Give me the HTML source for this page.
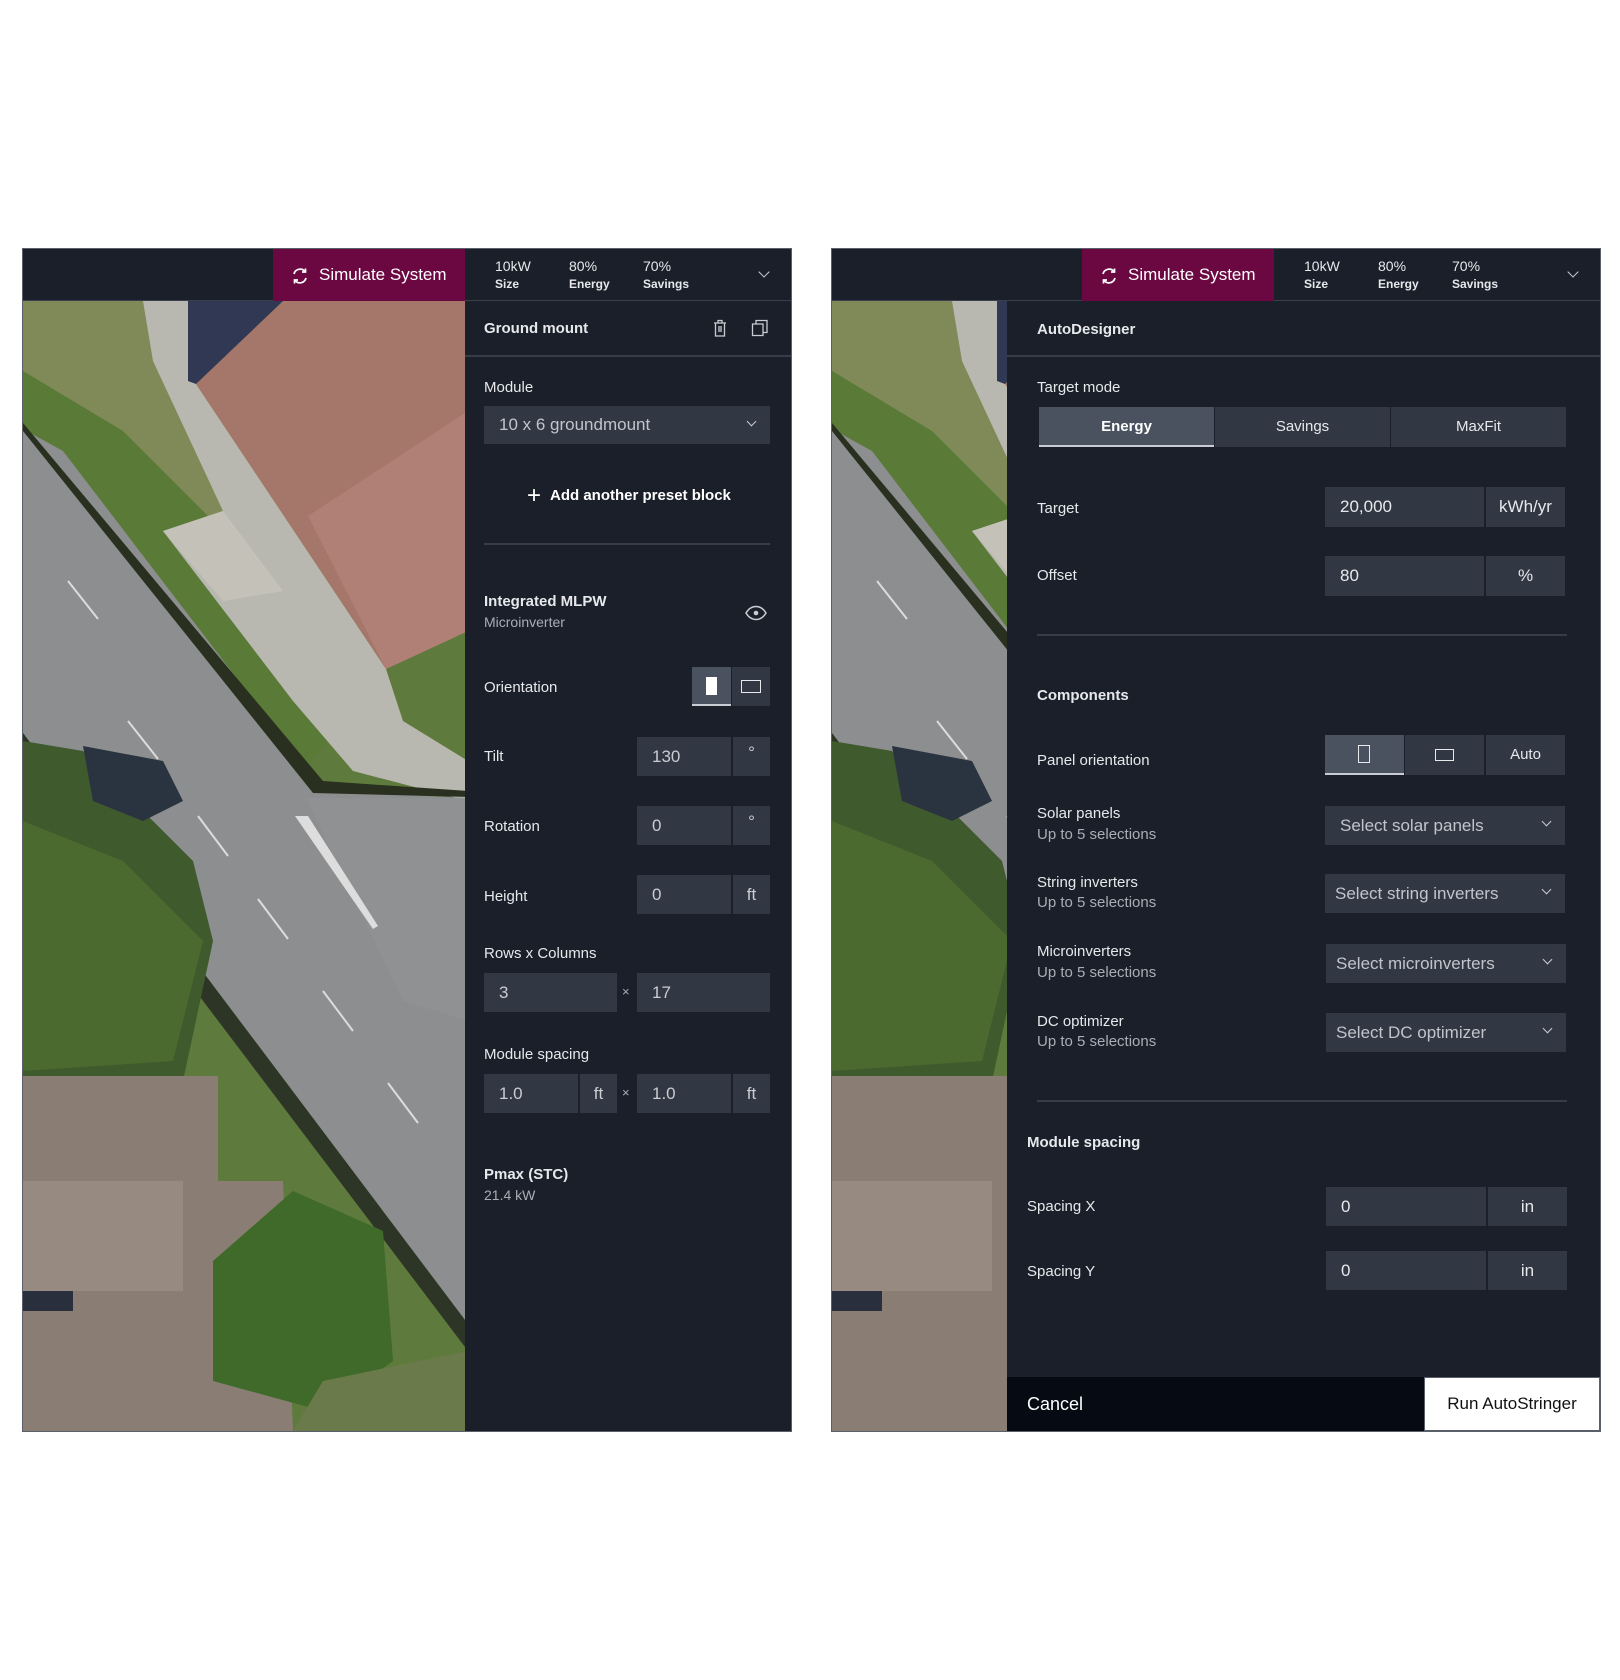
<!DOCTYPE html>
<html><head><meta charset="utf-8"><style>
*{margin:0;padding:0;box-sizing:border-box}
body{width:1620px;height:1680px;background:#fff;position:relative;font-family:"Liberation Sans",sans-serif;color:#e8eaee;overflow:hidden}
.a{position:absolute}
.frame{position:absolute;background:#1b1f29;border:1px solid #5a606a}
.t{position:absolute;white-space:nowrap;line-height:20px;font-size:15px;color:#e6e8ec}
.b{font-weight:bold}
.s{color:#a9aeb6}
.box{position:absolute;background:#323843;color:#c9ccd2;font-size:17px;line-height:20px}
.hl{position:absolute;height:2px;background:#373d48}
.sel{position:absolute;background:#323843;color:#c0c4cb;font-size:17px}
.chev{position:absolute;width:8px;height:8px;border-right:1.5px solid #c9ccd2;border-bottom:1.5px solid #c9ccd2;transform:rotate(45deg)}
.stat{position:absolute;font-size:14px;color:#e6e8ec;line-height:18px;text-align:left}
.stat i{display:block;font-style:normal;font-size:12px;font-weight:bold}
</style></head><body>

<svg width="0" height="0" style="position:absolute">
<defs>
<g id="map">
<rect width="442" height="1130" fill="#7d8b58"/>
<polygon points="0,0 173,0 173,83 363,368 445,330 445,1130 0,1130" fill="#5e7a3c"/>
<polygon points="0,0 140,0 200,100 330,300 200,300 60,110 0,80" fill="#7f8a58"/>
<polygon points="0,70 100,130 290,320 330,410 280,470 0,300" fill="#5a7a38"/>
<polygon points="120,0 173,0 173,83 363,368 380,420 445,460 445,500 330,470 270,400 140,230 200,210 130,60" fill="#b9b8b0"/>
<polygon points="140,230 200,210 260,290 200,300" fill="#c4c2b8"/>
<polygon points="173,83 260,0 445,0 445,330 363,368" fill="#a5766a"/>
<polygon points="285,215 445,110 445,330 363,368" fill="#b08076"/>
<polygon points="165,0 260,0 173,83 165,80" fill="#303853"/>
<polygon points="0,128 40,150 300,490 445,497 445,1023 0,432" fill="#8d8e8f"/>
<polygon points="283,497 445,497 445,720 380,700" fill="#909192"/>
<polygon points="0,122 300,480 445,490 445,496 290,492 0,130" fill="#2a3020"/>
<line x1="45" y1="280" x2="75" y2="318" stroke="#dcdcdc" stroke-width="2"/>
<line x1="105" y1="420" x2="135" y2="458" stroke="#dcdcdc" stroke-width="2"/>
<line x1="175" y1="515" x2="205" y2="555" stroke="#dcdcdc" stroke-width="2"/>
<line x1="235" y1="598" x2="265" y2="638" stroke="#dcdcdc" stroke-width="2"/>
<line x1="300" y1="690" x2="330" y2="730" stroke="#dcdcdc" stroke-width="2"/>
<line x1="365" y1="782" x2="395" y2="822" stroke="#dcdcdc" stroke-width="2"/>
<polygon points="272,515 285,515 355,625 350,628" fill="#dddddd"/>
<polygon points="0,432 445,1023 445,1050 0,462" fill="#2d3526"/>
<polygon points="0,440 60,450 170,560 190,640 160,780 0,790" fill="#3f5a2c"/>
<polygon points="60,445 140,460 160,500 120,520 70,500" fill="#2a3340"/>
<polygon points="0,520 100,560 180,640 150,760 0,770" fill="#4a6a30"/>
<polygon points="0,775 195,775 195,880 260,880 270,1130 0,1130" fill="#8a7e74"/>
<polygon points="0,880 160,880 160,990 0,990" fill="#978a80"/>
<polygon points="0,990 50,990 50,1010 0,1010" fill="#2a2f3d"/>
<polygon points="190,960 270,890 360,930 370,1060 300,1110 190,1080" fill="#3f6a2a"/>
<polygon points="270,1130 300,1080 445,1050 445,1130" fill="#6b7a4a"/>
</g>
</defs>
</svg>

<!-- PANEL 1 -->
<div class="frame" style="left:22px;top:248px;width:770px;height:1184px"></div>
<div class="a" style="left:23px;top:249px;width:768px;height:52px;background:#1b1f29;border-bottom:1px solid #3a404b"></div>
<div class="a" style="left:273px;top:249px;width:192px;height:52px;background:#6b0842"></div>
<svg class="a" style="left:290px;top:266px" width="20" height="20" viewBox="0 0 20 20"><path d="M4 8a6.3 6.3 0 0 1 11-2.5M16 12a6.3 6.3 0 0 1-11 2.5" fill="none" stroke="#fff" stroke-width="1.7"/><path d="M15.5 2.5v3.5h-3.5M4.5 17.5v-3.5h3.5" fill="none" stroke="#fff" stroke-width="1.7"/></svg>
<div class="t" style="left:319px;top:265px;font-size:17px;color:#fff">Simulate System</div>
<div class="stat" style="left:495px;top:257px">10kW<i>Size</i></div>
<div class="stat" style="left:569px;top:257px">80%<i>Energy</i></div>
<div class="stat" style="left:643px;top:257px">70%<i>Savings</i></div>
<div class="chev" style="left:760px;top:268px"></div>

<svg class="a" style="left:23px;top:301px" width="442" height="1130"><use href="#map"/></svg>

<div class="t b" style="left:484px;top:319px">Ground mount</div>
<svg class="a" style="left:711px;top:318px" width="18" height="20" viewBox="0 0 18 20"><path d="M3 5h12M7 5V2.5h4V5M4.5 5v13h9V5M8 8v6M10 8v6" fill="none" stroke="#c9ccd2" stroke-width="1.3"/></svg>
<svg class="a" style="left:750px;top:318px" width="20" height="20" viewBox="0 0 20 20"><path d="M6 6V2.5h11v12h-4M2.5 6h10.5v11.5H2.5z" fill="none" stroke="#c9ccd2" stroke-width="1.3"/></svg>
<div class="hl" style="left:465px;top:355px;width:326px"></div>

<div class="t" style="left:484px;top:378px">Module</div>
<div class="sel" style="left:484px;top:406px;width:286px;height:38px"><span class="a" style="left:15px;top:9px">10 x 6 groundmount</span><div class="chev" style="left:264px;top:12px;width:7px;height:7px"></div></div>
<div class="t b" style="left:527px;top:483px;font-size:15px;color:#fff"><span style="font-weight:normal;font-size:24px;position:relative;top:3px;margin-right:9px">+</span>Add another preset block</div>
<div class="hl" style="left:484px;top:543px;width:286px"></div>

<div class="t b" style="left:484px;top:592px">Integrated MLPW</div>
<div class="t s" style="left:484px;top:612px;font-size:14px">Microinverter</div>
<svg class="a" style="left:744px;top:604px" width="24" height="18" viewBox="0 0 24 18"><path d="M2 9C5 4 9 2.5 12 2.5S19 4 22 9C19 14 15 15.5 12 15.5S5 14 2 9z" fill="none" stroke="#c9ccd2" stroke-width="1.5"/><circle cx="12" cy="9" r="2.3" fill="#c9ccd2"/></svg>

<div class="t" style="left:484px;top:678px">Orientation</div>
<div class="a" style="left:692px;top:667px;width:39px;height:39px;background:#4a5260;border-bottom:2px solid #c9ccd2"></div>
<div class="a" style="left:706px;top:677px;width:11px;height:18px;background:#fff"></div>
<div class="a" style="left:732px;top:667px;width:38px;height:39px;background:#323843"></div>
<div class="a" style="left:741px;top:680px;width:20px;height:13px;border:1.5px solid #e6e8ec"></div>

<div class="t" style="left:484px;top:747px">Tilt</div>
<div class="box" style="left:637px;top:737px;width:94px;height:39px;padding:10px 15px">130</div>
<div class="box" style="left:733px;top:737px;width:37px;height:39px;text-align:center;padding-top:6px">°</div>
<div class="t" style="left:484px;top:817px">Rotation</div>
<div class="box" style="left:637px;top:806px;width:94px;height:39px;padding:10px 15px">0</div>
<div class="box" style="left:733px;top:806px;width:37px;height:39px;text-align:center;padding-top:6px">°</div>
<div class="t" style="left:484px;top:887px">Height</div>
<div class="box" style="left:637px;top:875px;width:94px;height:39px;padding:10px 15px">0</div>
<div class="box" style="left:733px;top:875px;width:37px;height:39px;text-align:center;padding-top:10px">ft</div>

<div class="t" style="left:484px;top:944px">Rows x Columns</div>
<div class="box" style="left:484px;top:973px;width:133px;height:39px;padding:10px 15px">3</div>
<div class="t s" style="left:622px;top:982px;font-size:13px">×</div>
<div class="box" style="left:637px;top:973px;width:133px;height:39px;padding:10px 15px">17</div>

<div class="t" style="left:484px;top:1045px">Module spacing</div>
<div class="box" style="left:484px;top:1074px;width:94px;height:39px;padding:10px 15px">1.0</div>
<div class="box" style="left:580px;top:1074px;width:37px;height:39px;text-align:center;padding-top:10px">ft</div>
<div class="t s" style="left:622px;top:1083px;font-size:13px">×</div>
<div class="box" style="left:637px;top:1074px;width:94px;height:39px;padding:10px 15px">1.0</div>
<div class="box" style="left:733px;top:1074px;width:37px;height:39px;text-align:center;padding-top:10px">ft</div>

<div class="t b" style="left:484px;top:1165px">Pmax (STC)</div>
<div class="t s" style="left:484px;top:1185px;font-size:14px">21.4 kW</div>

<!-- PANEL 2 -->
<div class="frame" style="left:831px;top:248px;width:770px;height:1184px"></div>
<div class="a" style="left:832px;top:249px;width:768px;height:52px;background:#1b1f29;border-bottom:1px solid #3a404b"></div>
<div class="a" style="left:1082px;top:249px;width:192px;height:52px;background:#6b0842"></div>
<svg class="a" style="left:1099px;top:266px" width="20" height="20" viewBox="0 0 20 20"><path d="M4 8a6.3 6.3 0 0 1 11-2.5M16 12a6.3 6.3 0 0 1-11 2.5" fill="none" stroke="#fff" stroke-width="1.7"/><path d="M15.5 2.5v3.5h-3.5M4.5 17.5v-3.5h3.5" fill="none" stroke="#fff" stroke-width="1.7"/></svg>
<div class="t" style="left:1128px;top:265px;font-size:17px;color:#fff">Simulate System</div>
<div class="stat" style="left:1304px;top:257px">10kW<i>Size</i></div>
<div class="stat" style="left:1378px;top:257px">80%<i>Energy</i></div>
<div class="stat" style="left:1452px;top:257px">70%<i>Savings</i></div>
<div class="chev" style="left:1569px;top:268px"></div>

<svg class="a" style="left:832px;top:301px" width="175" height="1130"><use href="#map"/></svg>

<div class="t b" style="left:1037px;top:320px">AutoDesigner</div>
<div class="hl" style="left:1007px;top:355px;width:593px"></div>

<div class="t" style="left:1037px;top:378px">Target mode</div>
<div class="a" style="left:1039px;top:407px;width:175px;height:40px;background:#4a5260;border-bottom:2px solid #c9ccd2;text-align:center;line-height:40px;font-size:15px;font-weight:bold;color:#fff">Energy</div>
<div class="a" style="left:1215px;top:407px;width:175px;height:40px;background:#323843;text-align:center;line-height:40px;font-size:15px;color:#e6e8ec">Savings</div>
<div class="a" style="left:1391px;top:407px;width:175px;height:40px;background:#323843;text-align:center;line-height:40px;font-size:15px;color:#e6e8ec">MaxFit</div>

<div class="t" style="left:1037px;top:499px">Target</div>
<div class="box" style="left:1325px;top:487px;width:159px;height:40px;padding:10px 15px;color:#e6e8ec">20,000</div>
<div class="box" style="left:1486px;top:487px;width:79px;height:40px;text-align:center;padding-top:10px;color:#e6e8ec">kWh/yr</div>
<div class="t" style="left:1037px;top:566px">Offset</div>
<div class="box" style="left:1325px;top:556px;width:159px;height:40px;padding:10px 15px;color:#e6e8ec">80</div>
<div class="box" style="left:1486px;top:556px;width:79px;height:40px;text-align:center;padding-top:10px;color:#e6e8ec">%</div>
<div class="hl" style="left:1037px;top:634px;width:530px"></div>

<div class="t b" style="left:1037px;top:686px">Components</div>
<div class="t" style="left:1037px;top:751px">Panel orientation</div>
<div class="a" style="left:1325px;top:735px;width:79px;height:40px;background:#4a5260;border-bottom:2px solid #c9ccd2"></div>
<div class="a" style="left:1358px;top:745px;width:12px;height:18px;border:1.5px solid #e6e8ec"></div>
<div class="a" style="left:1405px;top:735px;width:79px;height:40px;background:#323843"></div>
<div class="a" style="left:1435px;top:749px;width:19px;height:12px;border:1.5px solid #e6e8ec"></div>
<div class="a" style="left:1486px;top:735px;width:79px;height:40px;background:#323843;text-align:center;line-height:40px;font-size:15px;color:#e6e8ec">Auto</div>

<div class="t" style="left:1037px;top:804px">Solar panels</div>
<div class="t s" style="left:1037px;top:825px">Up to 5 selections</div>
<div class="sel" style="left:1325px;top:806px;width:240px;height:39px"><span class="a" style="left:15px;top:10px">Select solar panels</span><div class="chev" style="left:218px;top:12px;width:7px;height:7px"></div></div>
<div class="t" style="left:1037px;top:873px">String inverters</div>
<div class="t s" style="left:1037px;top:893px">Up to 5 selections</div>
<div class="sel" style="left:1325px;top:874px;width:240px;height:39px"><span class="a" style="left:10px;top:10px">Select string inverters</span><div class="chev" style="left:218px;top:12px;width:7px;height:7px"></div></div>
<div class="t" style="left:1037px;top:942px">Microinverters</div>
<div class="t s" style="left:1037px;top:963px">Up to 5 selections</div>
<div class="sel" style="left:1326px;top:944px;width:240px;height:39px"><span class="a" style="left:10px;top:10px">Select microinverters</span><div class="chev" style="left:218px;top:12px;width:7px;height:7px"></div></div>
<div class="t" style="left:1037px;top:1012px">DC optimizer</div>
<div class="t s" style="left:1037px;top:1032px">Up to 5 selections</div>
<div class="sel" style="left:1326px;top:1013px;width:240px;height:39px"><span class="a" style="left:10px;top:10px">Select DC optimizer</span><div class="chev" style="left:218px;top:12px;width:7px;height:7px"></div></div>
<div class="hl" style="left:1037px;top:1100px;width:530px"></div>

<div class="t b" style="left:1027px;top:1133px">Module spacing</div>
<div class="t" style="left:1027px;top:1197px">Spacing X</div>
<div class="box" style="left:1326px;top:1187px;width:160px;height:39px;padding:10px 15px;color:#e6e8ec">0</div>
<div class="box" style="left:1488px;top:1187px;width:79px;height:39px;text-align:center;padding-top:10px;color:#e6e8ec">in</div>
<div class="t" style="left:1027px;top:1262px">Spacing Y</div>
<div class="box" style="left:1326px;top:1251px;width:160px;height:39px;padding:10px 15px;color:#e6e8ec">0</div>
<div class="box" style="left:1488px;top:1251px;width:79px;height:39px;text-align:center;padding-top:10px;color:#e6e8ec">in</div>

<div class="a" style="left:1007px;top:1377px;width:417px;height:54px;background:#060a13"></div>
<div class="t" style="left:1027px;top:1394px;font-size:18px;color:#fff">Cancel</div>
<div class="a" style="left:1424px;top:1377px;width:176px;height:54px;background:#fff;border:1px solid #5a606a;text-align:center;line-height:52px;font-size:17px;color:#111">Run AutoStringer</div>
</body></html>
